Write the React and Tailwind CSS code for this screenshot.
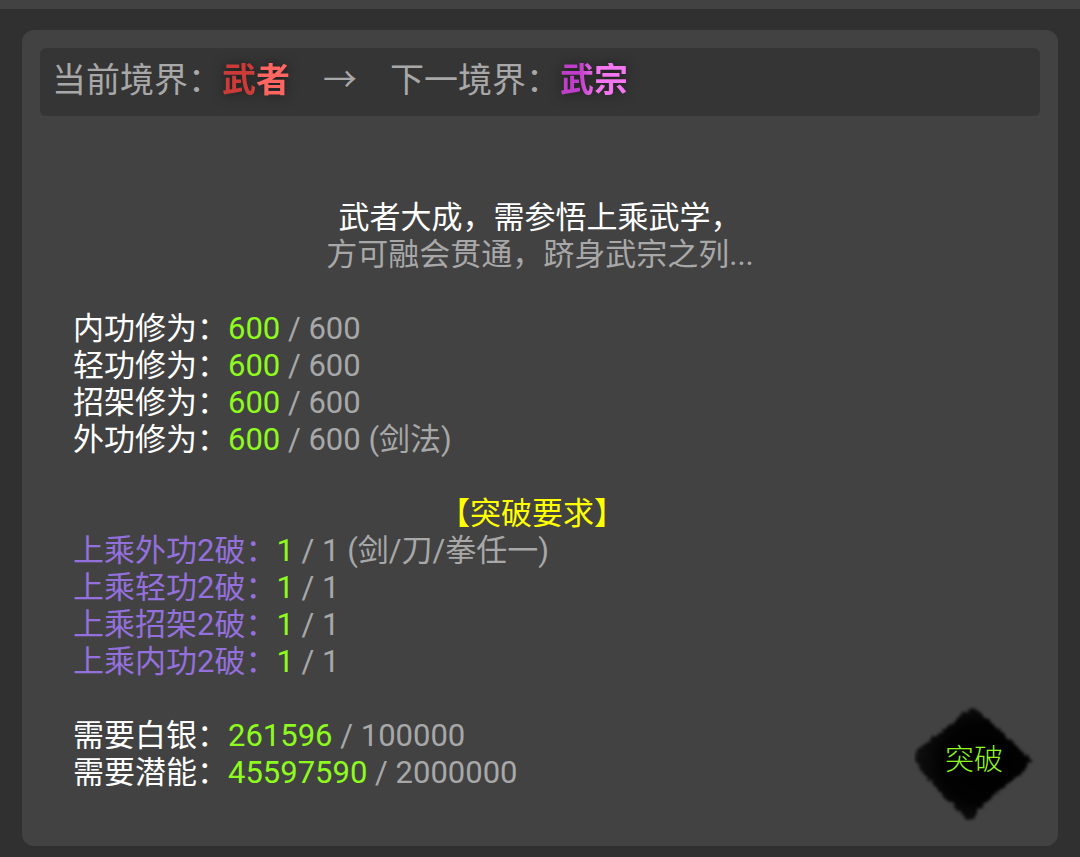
import React from 'react';

const trainingRows = [
  { label: '内功修为：', value: '600', target: '600' },
  { label: '轻功修为：', value: '600', target: '600' },
  { label: '招架修为：', value: '600', target: '600' },
  { label: '外功修为：', value: '600', target: '600', note: '(剑法)' },
];

const skillRows = [
  { label: '上乘外功2破：', value: '1', target: '1', note: '(剑/刀/拳任一)' },
  { label: '上乘轻功2破：', value: '1', target: '1' },
  { label: '上乘招架2破：', value: '1', target: '1' },
  { label: '上乘内功2破：', value: '1', target: '1' },
];

const costRows = [
  { label: '需要白银：', value: '261596', target: '100000' },
  { label: '需要潜能：', value: '45597590', target: '2000000' },
];

const RequirementList = ({ rows, labelClass }) => (
  <ul>
    {rows.map((row) => (
      <li key={row.label}>
        <span className={labelClass}>{row.label}</span>
        <span className="text-[#8ffa1e]">{row.value}</span>
        {` / ${row.target}`}
        {row.note && ` ${row.note}`}
      </li>
    ))}
  </ul>
);

const RealmHeader = () => (
  <header className="flex h-[68px] items-center rounded-md bg-[#353535] px-3 pb-1 text-[34px] leading-none whitespace-nowrap">
    <span>当前境界：</span>
    <strong className="bg-linear-to-r from-[#cc3b38] from-45% to-[#ff6662] to-52% bg-clip-text font-bold text-transparent drop-shadow-[0_0_6px_rgba(0,0,0,0.5)]">
      武者
    </strong>
    <span className="mx-[33px]">→</span>
    <span>下一境界：</span>
    <strong className="bg-linear-to-r from-[#c03fca] from-30% to-[#f476f0] to-55% bg-clip-text font-bold text-transparent drop-shadow-[0_0_6px_rgba(0,0,0,0.5)]">
      武宗
    </strong>
  </header>
);

// Ink-brush diamond behind the button label
const InkDiamond = () => (
  <svg className="absolute inset-0 h-full w-full" viewBox="0 0 120 116" aria-hidden="true">
    <defs>
      <filter id="ink-edge" x="-10%" y="-10%" width="120%" height="120%">
        <feTurbulence type="fractalNoise" baseFrequency="0.24" numOctaves="3" seed="4" result="noise" />
        <feDisplacementMap in="SourceGraphic" in2="noise" scale="7" xChannelSelector="R" yChannelSelector="G" />
        <feGaussianBlur stdDeviation="1.5" />
      </filter>
      <radialGradient id="ink-fill" cx="0.58" cy="0.5" r="0.58">
        <stop offset="0" stopColor="#000" />
        <stop offset="0.6" stopColor="#000" stopOpacity="0.97" />
        <stop offset="1" stopColor="#000" stopOpacity="0.75" />
      </radialGradient>
    </defs>
    <path
      d="M57 1 L64 5 L80 19 L98 35 L118 55 L111 63 L99 74 L82 88 L66 102 L60 113 L52 113 L42 103 L26 86 L10 68 L0 50 L5 43 L20 31 L38 17 Z"
      fill="url(#ink-fill)"
      filter="url(#ink-edge)"
    />
  </svg>
);

const BreakthroughButton = () => (
  <button
    type="button"
    className="absolute right-6 bottom-6 flex h-[116px] w-[120px] cursor-pointer items-center justify-center pb-2 text-[29px] leading-none font-light text-[#8ffa1e]"
  >
    <InkDiamond />
    <span className="relative">突破</span>
  </button>
);

export default function App() {
  return (
    <div className="flex min-h-screen flex-col bg-[#303030] font-[Roboto,'Noto_Sans_CJK_SC',sans-serif] text-[#a8a8a8]">
      <div className="h-[9px] bg-[#424242]" />

      <main className="relative mx-[22px] mt-[21px] mb-[11px] rounded-xl bg-[#424242] px-[18px] pt-[18px] pb-[55px]">
        <RealmHeader />

        <div className="mt-[83px] px-[33px] text-[31px] leading-[37px]">
          <div className="mb-[37px] text-center">
            <p className="text-white">武者大成，需参悟上乘武学，</p>
            <p>方可融会贯通，跻身武宗之列...</p>
          </div>

          <RequirementList rows={trainingRows} labelClass="text-white" />

          <h2 className="mt-[37px] pr-4 text-center text-[#ffff00]">【突破要求】</h2>
          <RequirementList rows={skillRows} labelClass="text-[#9370db]" />

          <div className="mt-[37px]">
            <RequirementList rows={costRows} labelClass="text-white" />
          </div>
        </div>

        <BreakthroughButton />
      </main>
    </div>
  );
}
